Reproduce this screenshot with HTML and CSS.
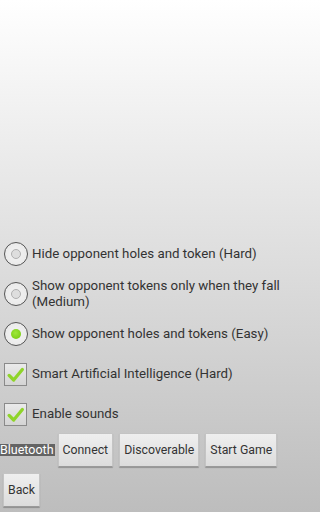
FILE: index.html
```html
<!DOCTYPE html>
<html>
<head>
<meta charset="utf-8">
<link rel="stylesheet" href="styles.css">
</head>
<body>
<div class="screen">
  <div class="options">
    <div class="row"><span class="radio"><span class="dot"></span></span><span class="label">Hide opponent holes and token (Hard)</span></div>
    <div class="row"><span class="radio"><span class="dot"></span></span><span class="label">Show opponent tokens only when they fall (Medium)</span></div>
    <div class="row"><span class="radio"><span class="dot on"></span></span><span class="label">Show opponent holes and tokens (Easy)</span></div>
    <div class="row"><span class="check"><svg viewBox="0 0 23 23" width="23" height="23"><path d="M4.5 12.5 L9.5 17.5 L19 6" fill="none" stroke="#8fd42a" stroke-width="3.6" stroke-linecap="round" stroke-linejoin="round"/></svg></span><span class="label">Smart Artificial Intelligence (Hard)</span></div>
    <div class="row"><span class="check"><svg viewBox="0 0 23 23" width="23" height="23"><path d="M4.5 12.5 L9.5 17.5 L19 6" fill="none" stroke="#8fd42a" stroke-width="3.6" stroke-linecap="round" stroke-linejoin="round"/></svg></span><span class="label">Enable sounds</span></div>
  </div>
  <div class="btnrow first">
    <span class="tag">Bluetooth</span>
    <button class="btn">Connect</button>
    <button class="btn">Discoverable</button>
    <button class="btn">Start Game</button>
  </div>
  <div class="btnrow second">
    <button class="btn">Back</button>
  </div>
</div>
</body>
</html>
```
FILE: styles.css
```css
html, body {
  margin: 0;
  padding: 0;
}
body {
  width: 300px;
  height: 512px;
  background: linear-gradient(#ffffff, #bdbdbd);
  font-family: Roboto, "Liberation Sans", sans-serif;
  color: #333;
  overflow: hidden;
}
.screen {
  height: 512px;
  display: flex;
  flex-direction: column;
  justify-content: flex-end;
  padding-bottom: 5px;
  box-sizing: border-box;
}
.options {
  display: flex;
  flex-direction: column;
}
.row {
  display: flex;
  align-items: center;
  height: 40px;
  padding-left: 4px;
}
.label {
  font-size: 13.3px;
  line-height: 16px;
  margin-left: 4px;
}
.radio {
  flex: none;
  width: 22px;
  height: 22px;
  border-radius: 50%;
  border: 1px solid #555;
  background: radial-gradient(circle, #f4f4f4 0%, #e6e6e6 100%);
  display: flex;
  align-items: center;
  justify-content: center;
}
.dot {
  width: 8px;
  height: 8px;
  border-radius: 50%;
  border: 1px solid #b0b0b0;
  background: #dedede;
}
.dot.on {
  width: 10px;
  height: 10px;
  border: none;
  background: radial-gradient(circle at 45% 40%, #9ee83a 0%, #7fd019 70%, #72b817 100%);
}
.check {
  flex: none;
  width: 21px;
  height: 21px;
  border: 1px solid #8a8a8a;
  background: linear-gradient(#eaeaea, #d4d4d4);
  display: flex;
  align-items: center;
  justify-content: center;
  margin-right: 1px;
}
.check svg {
  display: block;
}
.btnrow {
  display: flex;
  align-items: center;
  gap: 6px;
}
.btnrow.first {
  margin-top: -1px;
}
.btnrow.second {
  margin-top: 6px;
  padding-left: 3px;
}
.tag {
  background: #646464;
  color: #fff;
  font-size: 12.5px;
  line-height: 12px;
  height: 12px;
  padding: 0 1px 0 0;
  margin-right: -3px;
}
.btn {
  font-family: Roboto, "Liberation Sans", sans-serif;
  font-size: 12.3px;
  color: #333;
  height: 34px;
  padding: 0 4px;
  border: 1px solid #c4c4c4;
  border-bottom-color: #9a9a9a;
  border-radius: 1px;
  background: linear-gradient(#efefef, #dcdcdc);
  box-shadow: 0 1px 1px rgba(0, 0, 0, 0.25);
}
```
